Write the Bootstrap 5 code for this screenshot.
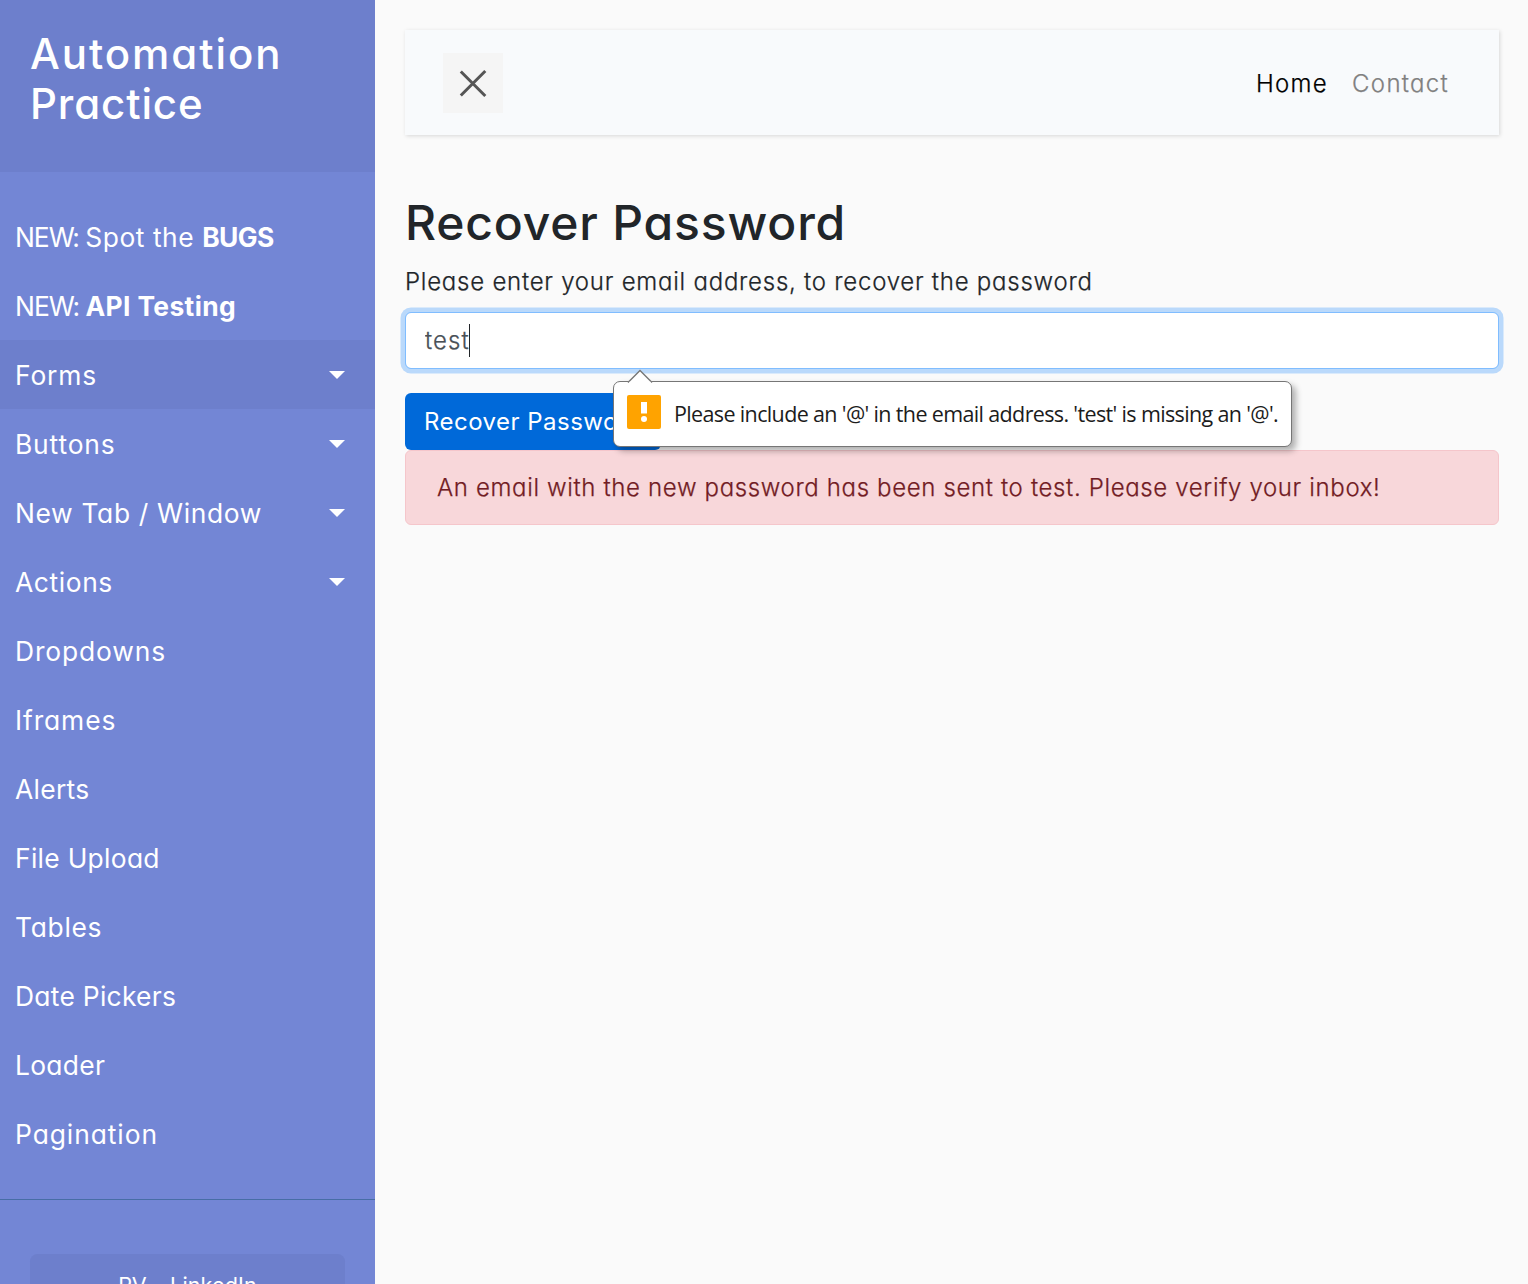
<!DOCTYPE html>
<html lang="en">
<head>
<meta charset="utf-8">
<meta name="viewport" content="width=device-width, initial-scale=1">
<title>Automation Practice - Recover Password</title>
<link href="https://cdn.jsdelivr.net/npm/bootstrap@5.3.0/dist/css/bootstrap.min.css" rel="stylesheet">
<style>
html { font-size: 24px; }
body { font-family: Inter, "Open Sans", sans-serif; font-feature-settings: "cv11"; font-weight: 350; background: #fafafa; color: #212529; height: 1284px; overflow: hidden; }
a { text-decoration: none; }
#sidebar { width: 375px; background: #7386d5; color: #fff; }
#sidebar a { color: #fff; }
.side-head { height: 172px; padding: 29px 30px 0; background: #6d7fcc; }
.side-head h3 { font-size: 42px; line-height: 50px; letter-spacing: 1.95px; }
.side-head h3 span { letter-spacing: .9px; }
.side-menu { padding: 30px 0; border-bottom: 1px solid #476da5; height: 1028px; }
.side-menu a { display: flex; align-items: center; height: 69px; padding: 2px 15px 0; font-size: 26.4px; font-weight: 400; white-space: pre; letter-spacing: .5px; }
.side-menu .opened { background: #6d7fcc; }
.side-menu .dropdown-toggle { justify-content: space-between; }
.side-menu .dropdown-toggle::after { border-width: 8px 8px 0; margin: -2px 15px 0 0; }
.side-menu li:nth-child(1) a { letter-spacing: .55px; }
.side-menu li:nth-child(1) span { letter-spacing: -1.05px; }
.side-menu li:nth-child(1) b { letter-spacing: -.6px; }
.side-menu li:nth-child(2) a { letter-spacing: -1px; }
.side-menu li:nth-child(2) b { letter-spacing: .38px; }
.side-menu li:nth-child(3) a, .side-menu li:nth-child(4) a { letter-spacing: .85px; }
.side-menu li:nth-child(5) a { letter-spacing: .66px; }
.side-menu li:nth-child(6) a { letter-spacing: .6px; }
.side-menu li:nth-child(7) a { letter-spacing: .88px; }
.side-menu li:nth-child(8) a { letter-spacing: .9px; }
.side-menu li:nth-child(9) a { letter-spacing: .3px; }
.side-menu li:nth-child(10) a { letter-spacing: .3px; }
.side-menu li:nth-child(11) a { letter-spacing: .7px; }
.side-menu li:nth-child(12) a { letter-spacing: .28px; }
.side-menu li:nth-child(13) a { letter-spacing: .3px; }
.side-menu li:nth-child(14) a { letter-spacing: .93px; }
.cta-list { padding: 54px 30px; }
.cta-list a { display: block; height: 63px; line-height: 62px; border-radius: 7.5px; background: #6d7fcc; font-size: 21.6px; font-weight: 400; text-align: center; letter-spacing: .1px; }
#content { padding: 30px 29px 30px 30px; }
.top-bar { height: 105px; padding: 0 38px; background: #f8fafc; box-shadow: 1px 1px 4px rgba(0,0,0,.14); margin-bottom: 59px; }
.collapse-btn { width: 60px; height: 60px; background: #f5f5f5; border: 0; padding: 0; }
.top-links .nav-link { padding: 2px 12px 0; letter-spacing: 1.3px; color: #808080; }
.top-links .nav-link.active { color: #000; }
.page-title { font-size: 48px; line-height: 57.6px; margin-bottom: 12px; letter-spacing: .83px; }
.top-links, .form-label, .form-control, .alert { -webkit-text-stroke: .25px; }
.form-label { letter-spacing: .76px; margin-bottom: 12px; }
.form-control, .form-control:focus { height: 57px; padding: 9px 19px; border: 1px solid #80bdff; border-radius: 6px; box-shadow: 0 0 0 4.5px #bad9fb; color: #495057; letter-spacing: 1.1px; font-weight: 350; }
.text-caret { position: absolute; left: 64px; top: 12px; width: 1px; height: 33px; background: #212529; }
.recover-btn { width: 256px; height: 57px; padding: 2px 19px 0; border: 0; border-radius: 6px; background: #0069d9; color: #fff; font-weight: 400; letter-spacing: .47px; text-align: left; white-space: nowrap; }
.alert { height: 75px; padding: 1px 31px 0; border-radius: 6px; background: #f8d7da; border-color: #f5c6cb; color: #721c24; letter-spacing: .645px; }
.validation-bubble { position: absolute; z-index: 5; left: 208px; top: 69px; width: 679px; height: 66px; padding: 0 12px 0 13px; background: #fff; border: 1px solid #767676; border-radius: 7px; box-shadow: 4px 4px 6px rgba(0,0,0,.3); color: #1c1c1c; font: 21.5px "Open Sans", sans-serif; white-space: nowrap; }
.bubble-arrow { position: absolute; left: 13px; top: -13px; }
.bubble-icon { margin-bottom: 4px; }
.bubble-text { letter-spacing: -.64px; margin-left: 13px; }
</style>
</head>
<body>
<div class="d-flex h-100 overflow-hidden">
  <nav id="sidebar" class="flex-shrink-0">
    <div class="side-head"><h3 class="mb-0">Automation<br><span>Practice</span></h3></div>
    <ul class="side-menu list-unstyled mb-0">
      <li><a href="#"><span>NEW: </span>Spot the <b>BUGS</b></a></li>
      <li><a href="#">NEW: <b>API Testing</b></a></li>
      <li><a href="#" class="dropdown-toggle opened">Forms</a></li>
      <li><a href="#" class="dropdown-toggle">Buttons</a></li>
      <li><a href="#" class="dropdown-toggle">New Tab / Window</a></li>
      <li><a href="#" class="dropdown-toggle">Actions</a></li>
      <li><a href="#">Dropdowns</a></li>
      <li><a href="#">Iframes</a></li>
      <li><a href="#">Alerts</a></li>
      <li><a href="#">File Upload</a></li>
      <li><a href="#">Tables</a></li>
      <li><a href="#">Date Pickers</a></li>
      <li><a href="#">Loader</a></li>
      <li><a href="#">Pagination</a></li>
    </ul>
    <ul class="cta-list list-unstyled mb-0"><li><a href="#">RV – LinkedIn</a></li></ul>
  </nav>
  <main id="content" class="flex-grow-1">
    <nav class="top-bar d-flex align-items-center justify-content-between">
      <button type="button" class="collapse-btn" aria-label="Toggle sidebar">
        <svg class="d-block" width="60" height="60" viewBox="0 0 60 60" fill="none" stroke="#555" stroke-width="3"><path d="M17.800 18.500 42.300 43M42.300 18 17.800 42.500"/></svg>
      </button>
      <div class="top-links nav">
        <a class="nav-link active" href="#">Home</a>
        <a class="nav-link pe-2" href="#">Contact</a>
      </div>
    </nav>
    <h2 class="page-title">Recover Password</h2>
    <form novalidate>
      <label class="form-label d-block" for="email">Please enter your email address, to recover the password</label>
      <div class="position-relative mb-3">
        <input type="text" class="form-control" id="email" value="test">
        <span class="text-caret"></span>
        <div class="validation-bubble d-flex align-items-center">
          <svg class="bubble-arrow" width="26" height="14" viewBox="0 0 26 14"><path d="M1 13.5 13 1.5 25 13.5" fill="#fff" stroke="#767676" stroke-width="1.4"/><path d="M2.4 13.5h21.2" stroke="#fff" stroke-width="1.5"/></svg>
          <svg class="bubble-icon flex-shrink-0" width="34" height="34" viewBox="0 0 34 34"><rect width="34" height="34" rx="2" fill="#ffa300"/><path d="M14 7h6v11.500h-6z" fill="#fff"/><circle cx="17" cy="24" r="3" fill="#fff"/></svg>
          <span class="bubble-text">Please include an '@' in the email address. 'test' is missing an '@'.</span>
        </div>
      </div>
      <button type="button" class="recover-btn d-block">Recover Password</button>
    </form>
    <div class="alert d-flex align-items-center" role="alert">An email with the new password has been sent to test. Please verify your inbox!</div>
  </main>
</div>
<script src="https://cdn.jsdelivr.net/npm/bootstrap@5.3.0/dist/js/bootstrap.bundle.min.js"></script>
</body>
</html>
